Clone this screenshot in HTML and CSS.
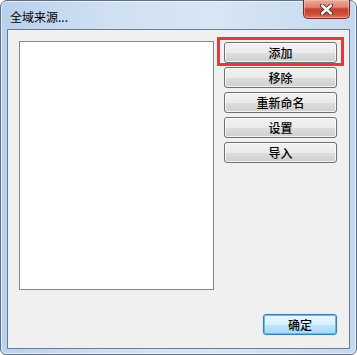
FILE: index.html
```html
<!DOCTYPE html>
<html>
<head>
<meta charset="utf-8">
<link rel="stylesheet" href="styles.css">
</head>
<body>
<div class="window">
  <div class="titlebar">
    <span class="title">全域来源...</span>
    <div class="close">
      <svg width="17" height="11" viewBox="0 0 17 11">
        <path d="M4 1.5 L13 9.5 M13 1.5 L4 9.5" stroke="#4a2a2a" stroke-width="4.2" stroke-linecap="round"/>
        <path d="M4 1.5 L13 9.5 M13 1.5 L4 9.5" stroke="#ffffff" stroke-width="2.4" stroke-linecap="round"/>
      </svg>
    </div>
  </div>
  <div class="client">
    <div class="main">
      <div class="listbox"></div>
      <div class="buttons">
        <div class="btn-wrap">
          <button class="btn">添加</button>
          <div class="highlight"></div>
        </div>
        <button class="btn">移除</button>
        <button class="btn">重新命名</button>
        <button class="btn">设置</button>
        <button class="btn">导入</button>
      </div>
    </div>
    <div class="footer">
      <button class="btn btn-default">确定</button>
    </div>
  </div>
</div>
</body>
</html>
```
FILE: styles.css
```css
html, body {
  margin: 0;
  padding: 0;
  background: #ffffff;
}
body {
  width: 357px;
  height: 355px;
  overflow: hidden;
  font-family: "Noto Sans CJK SC", "Noto Sans", sans-serif;
}
.window {
  box-sizing: border-box;
  width: 357px;
  height: 355px;
  border: 1px solid #5e6f86;
  border-radius: 7px 7px 6px 6px;
  background: linear-gradient(90deg, #b9d1ec 0%, #cfe0f3 30%, #d8e6f5 60%, #c4d8ef 100%);
  display: flex;
  flex-direction: column;
  padding: 0 6px 5px 6px;
  box-shadow: inset 0 0 0 1px rgba(255,255,255,0.6);
}
.titlebar {
  height: 28px;
  display: flex;
  align-items: flex-start;
  justify-content: space-between;
}
.title {
  font-size: 12px;
  line-height: 14px;
  color: #000;
  margin: 9px 0 0 3px;
}
.close {
  width: 47px;
  height: 19px;
  box-sizing: border-box;
  margin-top: -1px;
  border: 1px solid #6a2d25;
  border-top: none;
  border-radius: 0 0 5px 5px;
  background: linear-gradient(180deg, #e9aa9c 0%, #dc8573 40%, #c53f2b 50%, #cc4f3a 80%, #dc7c66 100%);
  display: flex;
  align-items: center;
  justify-content: center;
  box-shadow: inset 0 0 0 1px rgba(255,200,190,0.5);
}
.close svg { display: block; }
.client {
  box-sizing: border-box;
  height: 320px;
  border: 1px solid #6c7c92;
  background: #f0f0f0;
  padding: 11px 12px 13px 11px;
  display: flex;
  flex-direction: column;
}
.main {
  display: flex;
  gap: 10px;
}
.listbox {
  box-sizing: border-box;
  width: 196px;
  height: 249px;
  background: #fff;
  border: 1px solid #828790;
}
.buttons {
  display: flex;
  flex-direction: column;
  gap: 4px;
  margin-top: 1px;
}
.btn-wrap {
  position: relative;
}
.highlight {
  position: absolute;
  left: -7px;
  top: -5px;
  width: 127px;
  height: 29px;
  box-sizing: border-box;
  border: 3px solid #e53a3d;
}
.btn {
  box-sizing: border-box;
  display: block;
  width: 113px;
  height: 21px;
  margin: 0;
  padding: 0;
  border: 1px solid #707070;
  border-radius: 3px;
  background: linear-gradient(180deg, #f2f2f2 0%, #ebebeb 50%, #dddddd 51%, #cfcfcf 100%);
  box-shadow: inset 0 0 0 1px rgba(255,255,255,0.75);
  font-family: "Noto Sans CJK SC", "Noto Sans", sans-serif;
  font-size: 12px;
  font-weight: 500;
  line-height: 17px;
  color: #000;
}
.footer {
  margin-top: auto;
  display: flex;
  justify-content: flex-end;
}
.btn-default {
  width: 74px;
  border-color: #3c7fb1;
  background: linear-gradient(180deg, #eaf6fd 0%, #d9f0fc 50%, #bee6fd 51%, #a7d9f5 100%);
  box-shadow: inset 0 0 0 1px #5cc0ec, 0 0 1px #5cc0ec;
}
```
